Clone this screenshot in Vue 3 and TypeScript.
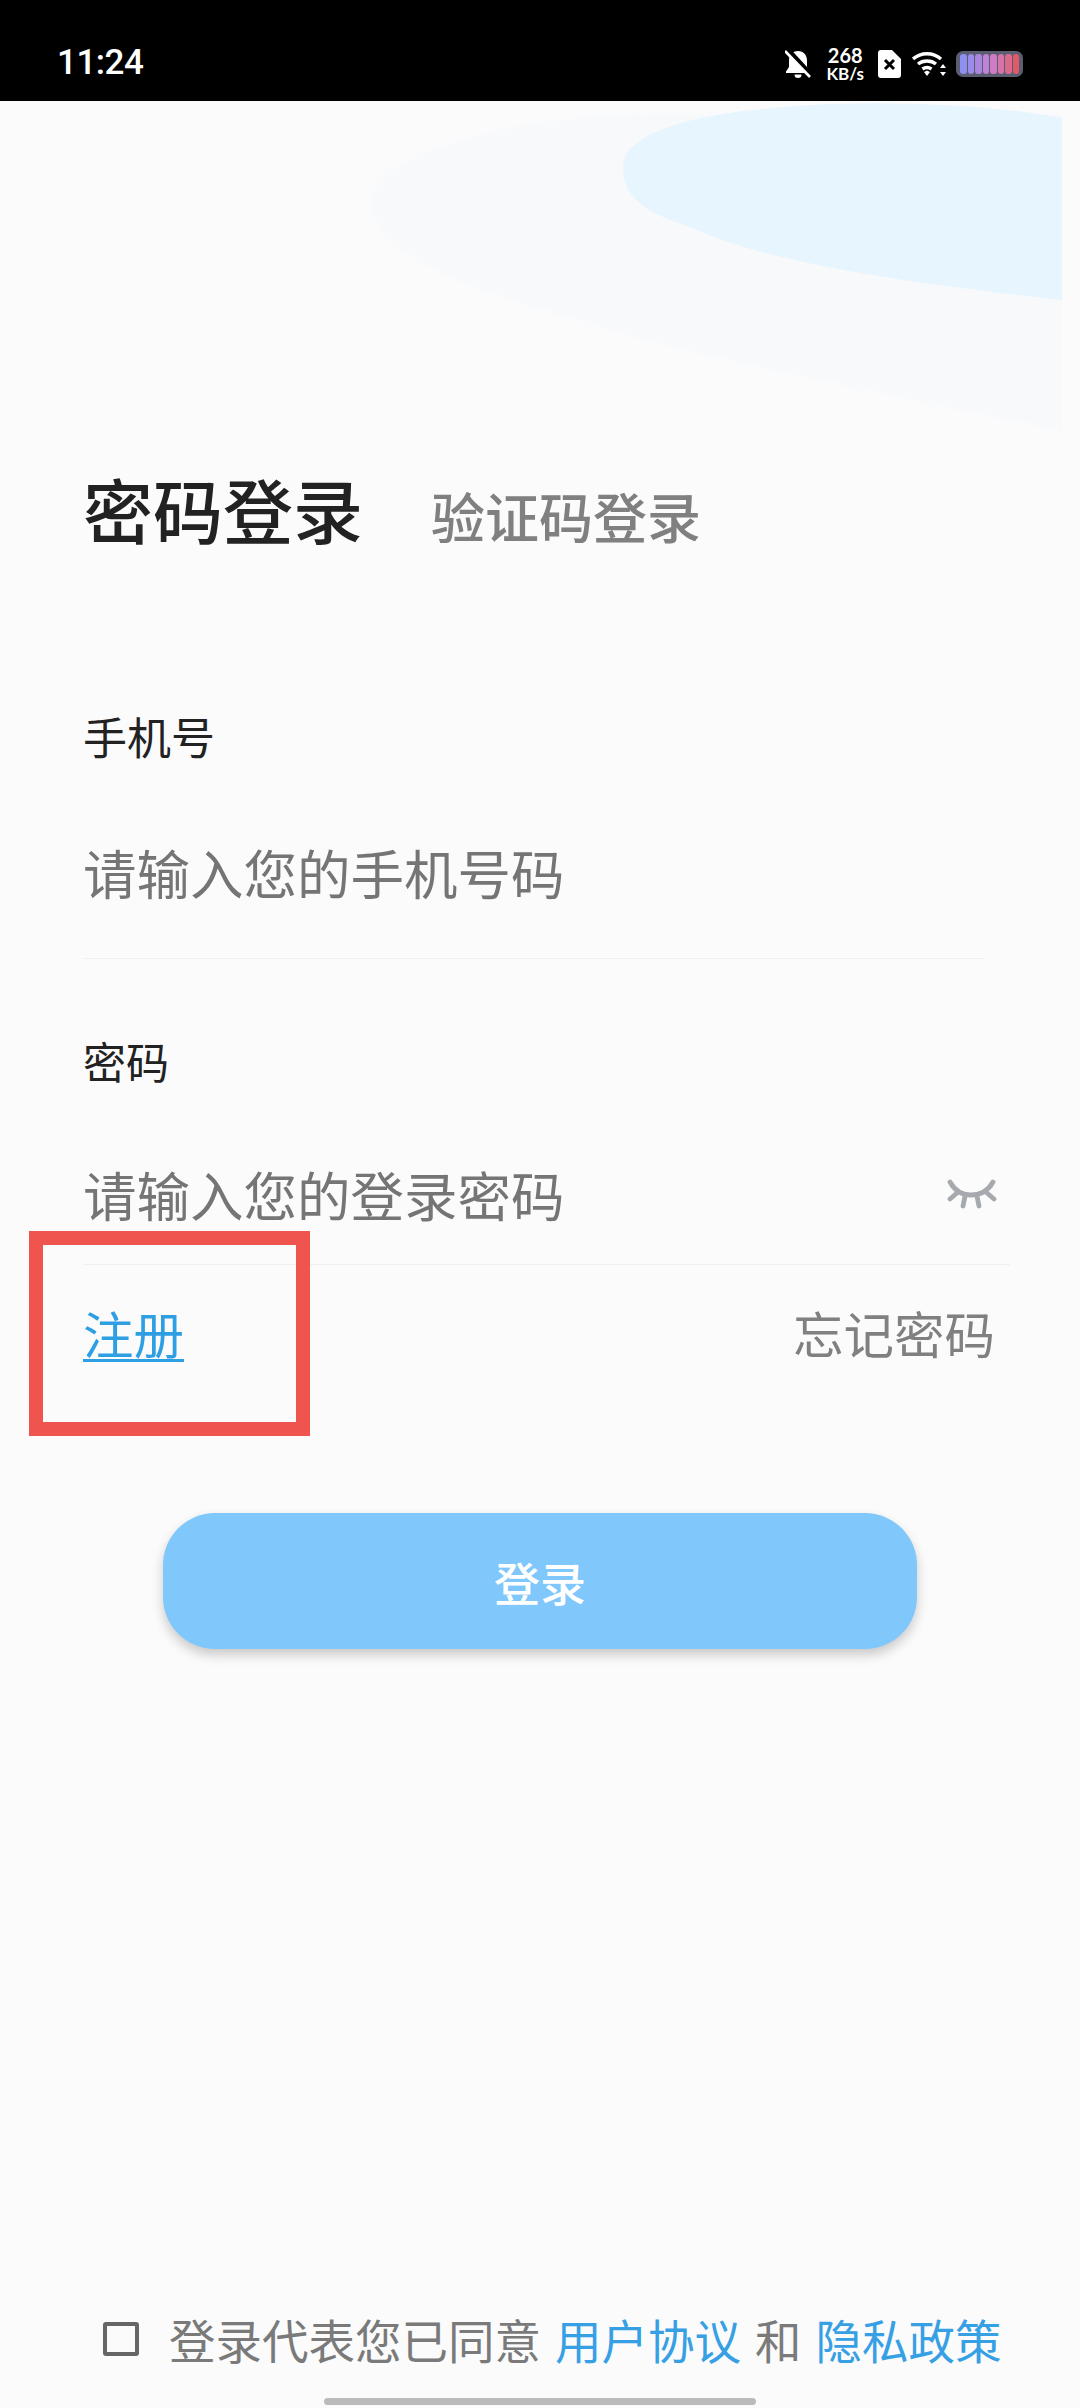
<script setup lang="ts">
const batteryBars = ['#8f8ff0', '#9a8cec', '#ab86de', '#bf82d6', '#cf7cc4', '#d873a8', '#dc6a8c', '#e05a68']
</script>

<template>
  <div class="page">
    <svg class="page__art" width="1062" height="340" viewBox="0 101 1062 340">
      <defs>
        <filter id="soft" x="-5%" y="-5%" width="110%" height="110%">
          <feGaussianBlur stdDeviation="3" />
        </filter>
      </defs>
      <path filter="url(#soft)" d="M1070 433C900 395 700 360 560 315C440 280 372 245 372 203C372 160 470 125 640 112L1070 112Z" fill="#f8f9fb" />
      <path d="M1062 118C1000 106 910 101 830 104C700 110 623 130 623 168C623 200 650 214 690 227C740 250 800 262 860 273C930 285 1000 293 1062 300Z" fill="#e7f5fe" />
    </svg>

    <header class="status">
      <span class="status__time">11:24</span>
      <div class="status__icons">
        <svg class="status__bell" width="26" height="29" viewBox="0 0 26 29">
          <path d="M13 1c-5.500 0-9 4-9 9.500v6.500l-3 4.500v1.500h24v-1.500l-3-4.500v-6.500c0-5.500-3.500-9.500-9-9.500z" fill="#fff" />
          <path d="M9.500 24.500h7a3.500 3.500 0 0 1-7 0z" fill="#fff" />
          <path d="M2 -1l25 27" stroke="#000" stroke-width="5" />
          <path d="M0 1l25 26" stroke="#fff" stroke-width="2.600" />
        </svg>
        <div class="status__speed">
          <span>268</span>
          <span>KB/s</span>
        </div>
        <svg class="status__sim" width="23" height="28" viewBox="0 0 23 28">
          <path d="M3 0h11l9 9v16a3 3 0 0 1-3 3H3a3 3 0 0 1-3-3V3a3 3 0 0 1 3-3z" fill="#fff" />
          <path d="M7 10l9 9M16 10l-9 9" stroke="#000" stroke-width="3" />
        </svg>
        <svg class="status__wifi" width="35" height="26" viewBox="0 0 35 26">
          <path d="M1 8C9 1 21 1 29 8M6 13c5-4 13-4 18 0M10.500 18c3-2 6-2 9 0" fill="none" stroke="#fff" stroke-width="3.400" />
          <path d="M12 21l3-1.500 3 1.500-3 4z" fill="#fff" />
          <path d="M31 13l3 4h-6zM31 25l3-4h-6z" fill="#fff" />
        </svg>
        <div class="status__battery">
          <span
            v-for="(color, i) in batteryBars"
            :key="i"
            class="status__cell"
            :style="{ background: color }"
          ></span>
        </div>
      </div>
    </header>

    <main class="login">
      <div class="tabs">
        <span class="tabs__active">密码登录</span>
        <span class="tabs__other">验证码登录</span>
      </div>

      <section class="field field--phone">
        <label class="field__label">手机号</label>
        <div class="field__input">
          <span>请输入您的手机号码</span>
        </div>
      </section>

      <section class="field field--password">
        <label class="field__label">密码</label>
        <div class="field__input">
          <span>请输入您的登录密码</span>
          <svg class="field__eye" width="50" height="30" viewBox="0 0 50 30">
            <g fill="none" stroke="#a6a9ad" stroke-width="4.800" stroke-linecap="round">
              <path d="M3 3c5 9 12 13 21 13s17-4 22-13" />
              <path d="M3 20l7-6M47 20l-7-6M16 27l2-10M32 27l-2-10" />
            </g>
          </svg>
        </div>
      </section>

      <div class="links">
        <a class="links__register">注册</a>
        <a class="links__forgot">忘记密码</a>
      </div>

      <button class="submit" type="button">登录</button>
    </main>

    <footer class="agree">
      <span class="agree__box"></span>
      <span class="agree__text">登录代表您已同意</span>
      <a class="agree__link">用户协议</a>
      <span class="agree__text">和</span>
      <a class="agree__link">隐私政策</a>
    </footer>
    <div class="home-bar"></div>

    <div class="highlight"></div>
  </div>
</template>

<style>
body {
  background: #fbfbfc;
}
</style>

<style scoped>
.page {
  position: relative;
  display: flex;
  flex-direction: column;
  width: 1080px;
  height: 2408px;
  overflow: hidden;
  background: #fbfbfc;
  font-family: "Noto Sans CJK SC", "Noto Sans", sans-serif;
}

.page__art {
  position: absolute;
  left: 0;
  top: 101px;
}

.status {
  position: relative;
  display: flex;
  flex: none;
  align-items: center;
  justify-content: space-between;
  height: 101px;
  padding: 0 57px;
  box-sizing: border-box;
  background: #000;
  color: #fff;
}

.status__time {
  font-family: Roboto, sans-serif;
  font-size: 35px;
  font-weight: 500;
  letter-spacing: -0.5px;
  margin-top: 23px;
}

.status__icons {
  display: flex;
  align-items: center;
  margin-top: 27px;
}

.status__speed {
  display: flex;
  flex-direction: column;
  align-items: center;
  margin-left: 15px;
  font-family: Lato, sans-serif;
  font-weight: 700;
}

.status__speed span:first-child {
  font-size: 20px;
  line-height: 19px;
}

.status__speed span:last-child {
  font-size: 17px;
  line-height: 17px;
}

.status__sim {
  margin-left: 14px;
}

.status__wifi {
  margin-left: 11px;
}

.status__battery {
  display: flex;
  gap: 1px;
  width: 67px;
  height: 26px;
  margin-left: 9px;
  padding: 3px 4px;
  box-sizing: border-box;
  border-radius: 7px;
  background: #5b5d70;
}

.status__cell {
  flex: 1;
  border-radius: 3px;
}

.login {
  position: relative;
  display: flex;
  flex-direction: column;
  padding-left: 83px;
}

.tabs {
  display: flex;
  align-items: baseline;
  gap: 68px;
  height: 80px;
  margin-top: 357px;
}

.tabs__active {
  font-size: 70px;
  font-weight: 500;
  color: #222;
}

.tabs__other {
  font-size: 54px;
  font-weight: 500;
  color: #808080;
}

.field {
  display: flex;
  flex-direction: column;
}

.field--phone {
  width: 900px;
  margin-top: 173px;
}

.field--password {
  width: 927px;
  margin-top: 76px;
}

.field__label {
  font-size: 43px;
  line-height: 50px;
  color: #222;
}

.field--phone .field__label {
  font-size: 44px;
}

.field__input {
  display: flex;
  align-items: center;
  justify-content: space-between;
  box-sizing: border-box;
  border-bottom: 1px solid #f0f0f1;
  font-size: 53.5px;
  line-height: 70px;
  color: #757575;
}

.field--phone .field__input {
  height: 198px;
  padding: 76px 0 52px;
}

.field--password .field__input {
  height: 180px;
  padding: 74px 0 36px;
}

.field__eye {
  margin-right: 13px;
}

.links {
  display: flex;
  align-items: center;
  justify-content: space-between;
  width: 912px;
  height: 70px;
  margin-top: 32px;
  font-size: 50.5px;
  line-height: 70px;
}

.links__register {
  color: #2f9fe4;
  text-decoration: underline;
  text-underline-offset: 5px;
  text-decoration-thickness: 3px;
}

.links__forgot {
  color: #808080;
}

.submit {
  width: 754px;
  height: 136px;
  margin-top: 146px;
  margin-left: 80px;
  border: none;
  border-radius: 52px;
  background: #80c8fb;
  box-shadow: 0 6px 12px rgba(0, 0, 0, 0.2);
  color: #fff;
  font-family: inherit;
  font-size: 46px;
  font-weight: 500;
  cursor: pointer;
}

.agree {
  position: relative;
  display: flex;
  align-items: center;
  margin-top: auto;
  padding-left: 103px;
  height: 60px;
  margin-bottom: 39px;
  font-size: 46.5px;
  line-height: 60px;
}

.agree__box {
  width: 36px;
  height: 34px;
  margin-right: 30px;
  box-sizing: border-box;
  border: 4px solid #666;
  border-radius: 3px;
}

.agree__text {
  color: #7a7a7a;
}

.agree__link {
  margin: 0 14px;
  color: #37a0e4;
}

.agree__link:last-child {
  margin-right: 0;
}

.home-bar {
  position: absolute;
  left: 324px;
  top: 2398px;
  width: 432px;
  height: 7px;
  border-radius: 4px;
  background: #bbb;
}

.highlight {
  position: absolute;
  left: 29px;
  top: 1231px;
  width: 281px;
  height: 205px;
  box-sizing: border-box;
  border: 14px solid #f0544f;
}
</style>
